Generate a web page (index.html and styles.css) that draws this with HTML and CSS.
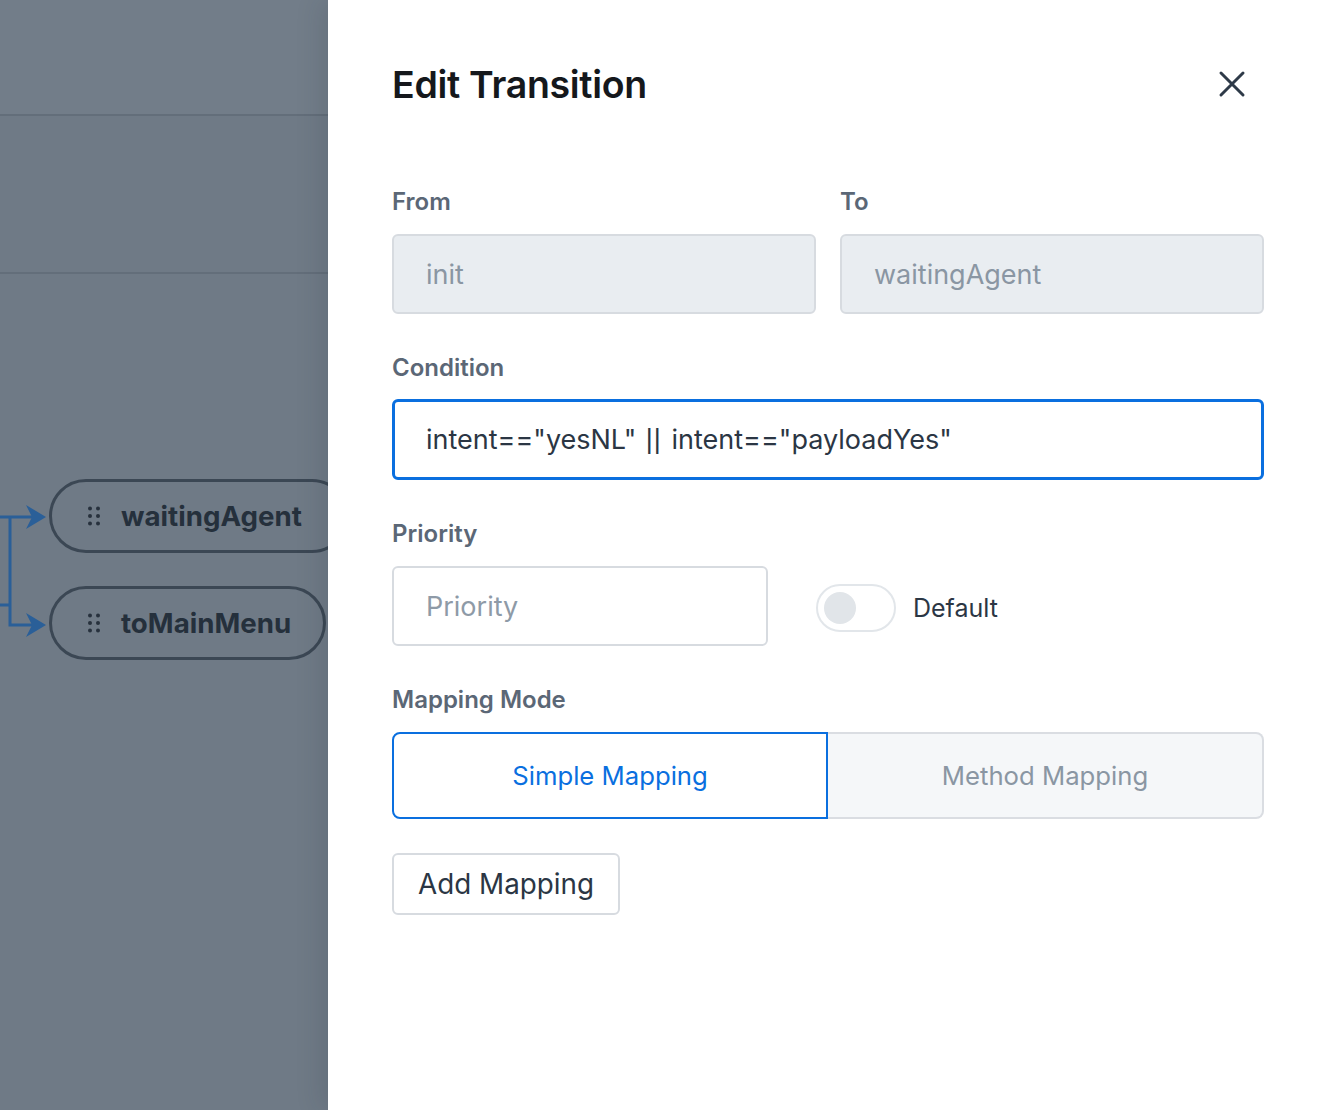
FILE: index.html
```html
<!DOCTYPE html>
<html>
<head>
<meta charset="utf-8">
<link rel="stylesheet" href="styles.css">
</head>
<body>
<div class="app">
  <div class="canvas">
    <div class="canvas-bar"></div>
    <div class="canvas-sub"></div>
    <div class="diagram">
      <svg class="edges" width="60" height="200" viewBox="0 0 60 200">
        <path d="M0 36 H40 M10 36 V144 H40 M0 124 H10" fill="none" stroke="#2a5f98" stroke-width="3"/>
        <path d="M26 24 L46 36 L26 48 L32 36 Z" fill="#2a5f98"/>
        <path d="M26 132 L46 144 L26 156 L32 144 Z" fill="#2a5f98"/>
      </svg>
      <div class="node node-a">
        <svg class="grip" width="12" height="20" viewBox="0 0 12 20"><g fill="#27313d"><circle cx="2" cy="2.5" r="2"/><circle cx="10" cy="2.5" r="2"/><circle cx="2" cy="10" r="2"/><circle cx="10" cy="10" r="2"/><circle cx="2" cy="17.5" r="2"/><circle cx="10" cy="17.5" r="2"/></g></svg>
        <span class="node-text">waitingAgent</span>
      </div>
      <div class="node node-b">
        <svg class="grip" width="12" height="20" viewBox="0 0 12 20"><g fill="#27313d"><circle cx="2" cy="2.5" r="2"/><circle cx="10" cy="2.5" r="2"/><circle cx="2" cy="10" r="2"/><circle cx="10" cy="10" r="2"/><circle cx="2" cy="17.5" r="2"/><circle cx="10" cy="17.5" r="2"/></g></svg>
        <span class="node-text">toMainMenu</span>
      </div>
    </div>
  </div>
  <aside class="panel">
    <header class="panel-head">
      <h1 class="title">Edit Transition</h1>
      <button class="close" aria-label="Close">
        <svg width="28" height="28" viewBox="0 0 28 28"><path d="M3 3 L25 25 M25 3 L3 25" stroke="#2e3a48" stroke-width="3" stroke-linecap="round"/></svg>
      </button>
    </header>
    <div class="row two">
      <div class="field">
        <label class="label">From</label>
        <div class="input disabled">init</div>
      </div>
      <div class="field">
        <label class="label">To</label>
        <div class="input disabled">waitingAgent</div>
      </div>
    </div>
    <div class="field">
      <label class="label">Condition</label>
      <div class="input focus">intent=="yesNL" <span class="pipes">||</span> intent=="payloadYes"</div>
    </div>
    <div class="field">
      <label class="label">Priority</label>
      <div class="prio-row">
        <div class="input placeholder prio">Priority</div>
        <div class="toggle-group">
          <div class="toggle"><span class="knob"></span></div>
          <span class="toggle-label">Default</span>
        </div>
      </div>
    </div>
    <div class="field">
      <label class="label">Mapping Mode</label>
      <div class="segmented">
        <div class="seg active">Simple Mapping</div>
        <div class="seg">Method Mapping</div>
      </div>
    </div>
    <div class="actions">
      <button class="btn">Add Mapping</button>
    </div>
  </aside>
</div>
</body>
</html>
```

FILE: styles.css
```css
* { box-sizing: border-box; }
html, body { margin: 0; padding: 0; }
body {
  font-family: Inter, "Noto Sans", "Liberation Sans", sans-serif;
  font-feature-settings: "calt" 0;
  width: 1328px;
  height: 1110px;
  overflow: hidden;
  background: #fff;
}
.app {
  display: flex;
  height: 1110px;
}
.canvas {
  width: 328px;
  flex: none;
  background: #6f7a86;
  position: relative;
  overflow: hidden;
}
.canvas-bar {
  height: 116px;
  border-bottom: 2px solid #636e7a;
  background: #727d89;
}
.canvas-sub {
  height: 158px;
  border-bottom: 2px solid #636e7a;
}
.diagram {
  position: relative;
  height: 500px;
}
.edges {
  position: absolute;
  left: 0;
  top: 207px;
}
.node {
  position: absolute;
  left: 49px;
  height: 74px;
  border: 3px solid #3b4754;
  border-radius: 37px;
  display: flex;
  align-items: center;
  padding-left: 36px;
  gap: 21px;
}
.node-a { top: 205px; width: 300px; }
.node-b { top: 312px; width: 277px; }
.grip { flex: none; display: block; }
.node-text {
  font-size: 27.7px;
  font-weight: 700;
  color: #25303c;
}
.panel {
  flex: 1;
  padding: 0 64px;
  box-shadow: -8px 0 24px rgba(30, 40, 50, 0.12);
  position: relative;
}
.panel-head {
  display: flex;
  align-items: center;
  justify-content: space-between;
  height: 186px;
  padding-bottom: 18px;
}
.title {
  margin: 0;
  font-size: 37.5px;
  font-weight: 600;
  color: #15181c;
  letter-spacing: -0.3px;
}
.close {
  border: 0;
  background: none;
  padding: 0;
  margin-right: 18px;
  width: 28px;
  height: 28px;
  display: flex;
}
.row.two {
  display: grid;
  grid-template-columns: 1fr 1fr;
  gap: 24px;
}
.field {
  display: flex;
  flex-direction: column;
  margin-bottom: 38px;
}
.label {
  font-size: 24px;
  font-weight: 600;
  color: #5b6776;
  height: 32px;
  line-height: 32px;
  margin-bottom: 16px;
}
.input {
  height: 80px;
  border: 2px solid #d7dbe0;
  border-radius: 6px;
  font-size: 27px;
  color: #2b3644;
  display: flex;
  align-items: center;
  padding-left: 32px;
  background: #fff;
  white-space: pre;
}
.pipes {
  font-family: "Liberation Sans", sans-serif;
  font-size: 27px;
  letter-spacing: 1px;
  padding: 0 2px;
}
.input.disabled {
  background: #e9edf1;
  color: #8a96a3;
}
.input.focus {
  border: 3px solid #0a6fdf;
  height: 81px;
  margin-top: -1px;
  padding-left: 31px;
}
.input.placeholder { color: #8e9aa7; }
.prio-row {
  display: flex;
  align-items: center;
}
.prio { width: 376px; }
.toggle-group {
  display: flex;
  align-items: center;
  margin-left: 48px;
  margin-top: 4px;
}
.toggle {
  width: 80px;
  height: 48px;
  border: 2px solid #e2e6ea;
  border-radius: 24px;
  display: flex;
  align-items: center;
  padding-left: 6px;
}
.knob {
  width: 32px;
  height: 32px;
  border-radius: 50%;
  background: #e1e5e9;
}
.toggle-label {
  font-size: 25px;
  color: #2b3644;
  margin-left: 17px;
}
.segmented {
  display: grid;
  grid-template-columns: 436px 1fr;
  height: 87px;
}
.seg {
  display: flex;
  align-items: center;
  justify-content: center;
  font-size: 25.7px;
  color: #8a96a3;
  background: #f5f7f9;
  border: 2px solid #dadde2;
  border-left: 0;
  border-radius: 0 8px 8px 0;
}
.seg.active {
  background: #fff;
  color: #0a6fdf;
  border: 2px solid #0a6fdf;
  border-radius: 8px 0 0 8px;
}
.actions {
  margin-top: -4px;
}
.btn {
  font-family: inherit;
  height: 62px;
  padding: 0 24px;
  font-size: 27.8px;
  color: #2b3644;
  background: #fff;
  border: 2px solid #d7dbe0;
  border-radius: 6px;
}
```
